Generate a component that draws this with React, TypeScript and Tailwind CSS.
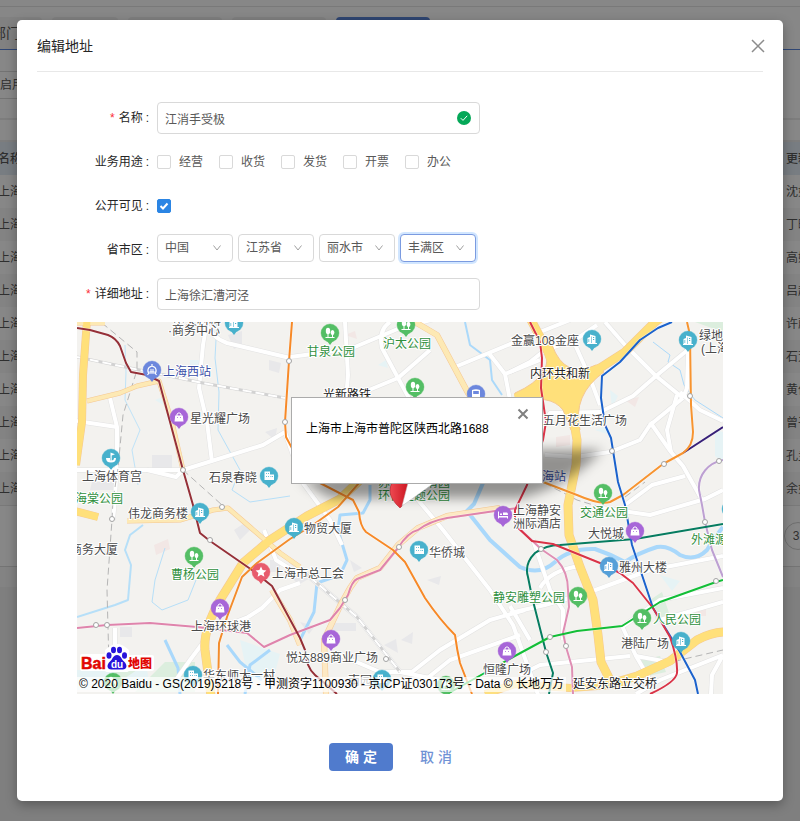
import { useState } from 'react';

const fontStack = "font-['Liberation_Sans','Noto_Sans_CJK_SC',sans-serif]";

const updaters = ['沈如', '丁晓', '高娟', '吕超', '许蔚', '石芳', '黄伟', '曾平', '孔圭', '余如'];

function BackgroundPage() {
  return (
    <div aria-hidden="true" className="absolute inset-0 overflow-hidden bg-[#f0f0f0] text-xs text-[#595959]">
      <div className="h-[567px] border-b border-[#dcdcdc] bg-white">
        <div className="h-[7px] border-b border-[#e4e4e4]" />
        <div className="flex h-[43px] items-stretch gap-[10px] border-b border-[#5b86dc] pt-[10px]">
          <div className="-ml-2 flex w-[50px] items-center rounded-t bg-[#f4f4f4] text-sm whitespace-nowrap">部门</div>
          <div className="w-[66px] rounded-t bg-[#f0f0f0]" />
          <div className="w-[94px] rounded-t bg-[#f0f0f0]" />
          <div className="w-[94px] rounded-t bg-[#f0f0f0]" />
          <div className="w-[94px] rounded-t bg-[#5a84d8]" />
        </div>
        <div className="h-[70px] border-b-2 border-[#ececec] pt-[21px]">
          <div className="-ml-3 flex h-7 w-20 items-center border-y border-[#d9d9d9]">已启用</div>
        </div>
        <div className="h-[22px] border-b-2 border-[#ececec]" />
        <div className="flex h-[33px] items-center justify-between bg-[#e3edf5] font-medium">
          <span className="-ml-0.5">名称</span>
          <span className="w-[14px] whitespace-nowrap">更新</span>
        </div>
        {updaters.map((name) => (
          <div key={name} className="flex h-[33px] items-center justify-between even:bg-white odd:bg-[#f8f8f8]">
            <span className="-ml-0.5">上海</span>
            <span className="w-[14px] whitespace-nowrap">{name}</span>
          </div>
        ))}
        <div className="flex justify-end border-t border-[#e4e4e4] pt-4">
          <span className="-mr-3 flex size-7 items-center justify-center rounded-full border border-[#d0d0d0] pr-1 text-xs">3</span>
        </div>
      </div>
      <div className="h-5 bg-[#f8f8f8]" />
      <div className="absolute inset-0 bg-black/47" />
    </div>
  );
}

type Road = { d: string; c: string; w: number };

const minor: string[] = [
  'M110 398 117 427 117 455 115 500 113 520',
  'M77 421 90 423 117 427',
  'M207 322 203 345 199 388 207 422 212 462',
  'M205 322Q212 338 227 343L290 358',
  'M77 470 147 470 183 470 263 445 285 432',
  'M147 470 176 477 183 470',
  'M285 432 290 447 303 483 330 520 342 545',
  'M290 357 350 349 400 328 450 315',
  'M345 322 348 375 346 400',
  'M390 322Q378 330 382 348L398 378 410 400',
  'M340 402 398 378 430 350',
  'M455 367 520 340 570 320',
  'M488 352 505 374 540 360M505 374 510 400',
  'M510 372 530 362 545 350 575 340 597 325',
  'M573 340 590 378 600 405',
  'M605 322 625 345 656 376 683 398',
  'M600 412 633 396 656 376 690 348',
  'M683 398 650 425 640 440 610 452 575 457 545 455',
  'M650 422 671 452 683 466 702 500',
  'M677 395 667 430 671 452',
  'M680 392 700 410 723 421',
  'M545 422 550 413 600 412',
  'M688 350 687 388 683 398',
  'M625 505 652 485 685 476',
  'M602 508 650 515 705 499 723 490',
  'M418 500 443 530 490 590 513 625 540 700',
  'M533 540 550 590 563 610 563 640',
  'M510 613 545 605 590 592 650 570 723 556',
  'M540 588Q550 570 580 566',
  'M622 627 660 600 723 588',
  'M622 626 636 656 650 680',
  'M636 656 668 662',
  'M660 620 723 602',
  'M510 606 530 640',
  'M520 675 540 665 590 660 630 656',
  'M290 560 325 590 357 617 400 672 440 680',
  'M340 655 380 672 412 672 440 650 490 620 525 610',
  'M425 680 450 660 520 635',
  'M300 583 280 590 262 608 248 617 225 626',
  'M264 530 276 560 300 575',
  'M115 628 115 652 100 660',
  'M205 640 190 660 176 680',
  'M636 694 660 680 723 655M711 694 712 675 723 655',
];

const rivers: Road[] = [
  { d: 'M125 345 126 372 125 400 140 430 132 450 138 485', c: '#bfe3f8', w: 1 },
  { d: 'M217 322 215 358 219 392 218 430 240 470 232 490 250 502 290 496', c: '#b6dff8', w: 1 },
  { d: 'M465 322 470 345 490 360 492 380 502 395', c: '#abd9fa', w: 2 },
  { d: 'M653 342 670 355 668 362 680 370 684 385 695 400 723 418', c: '#abd9fa', w: 1 },
  { d: 'M143 525 130 535 125 550 131 565 128 600 115 605 77 617', c: '#b6dff8', w: 2 },
  { d: 'M165 548 155 580 152 602 162 610 188 600 196 580', c: '#b6dff8', w: 1 },
  { d: 'M370 485 370 500 363 513 340 515 338 530 347 560 340 575 317 583 314 612 300 640', c: '#a9d8fb', w: 3 },
  { d: 'M483 483 474 504 467 511 490 540 520 567Q540 576 555 562T595 549Q610 554 625 562 638 553 657 547 668 545 680 555 695 562 707 550L713 540 723 527', c: '#a9d8fb', w: 4 },
  { d: 'M165 640 178 668 180 694M227 645 240 662 262 680M245 694 250 665 270 650', c: '#a9d8fb', w: 3 },
];

const yellow: Road[] = [
  { d: 'M77 323H105M87 401 120 393 137 386 159 381 172 422 183 470', c: '#fde9b4', w: 4 },
  { d: 'M127 521 180 520 213 510 228 508 250 527 280 553 300 567', c: '#fde9b4', w: 4 },
  { d: 'M272 590 290 620 300 645M326 694 324 640 340 606 350 588 357 578 380 568 398 545 418 528 447 516 500 508', c: '#fde9c4', w: 5 },
  { d: 'M415 322 437 335 468 393 500 440', c: '#fde9b4', w: 5 },
  { d: 'M485 694 515 684 570 688 625 684', c: '#fddf80', w: 7 },
  { d: 'M87 320 83 375 82 422 76 465', c: '#ffe07a', w: 7 },
  { d: 'M75 511 98 517', c: '#ffe07a', w: 7 },
  { d: 'M360 480 340 499 307 516 270 540 243 563 220 600Q203 630 205 650L211 696', c: '#ffe07a', w: 8 },
  { d: 'M531 320 548 352 562 390', c: '#ffe07a', w: 8 },
  { d: 'M515 398 550 390 572 380 600 368 625 352 655 322 665 315', c: '#ffe07a', w: 8 },
  { d: 'M563 385 572 410 577 440 576 465 568 505 569 535 580 567 593 600 598 635 601 662 612 684', c: '#ffe07a', w: 8 },
  { d: 'M610 684 637 676 670 661 697 640Q712 632 725 632', c: '#ffe07a', w: 8 },
];

const metro: Road[] = [
  { d: 'M77 628 107 625 150 623 197 627 247 633 264 647 290 635 330 620 340 608 348 595Q352 581 357 579L380 570 398 548Q408 532 418 530 430 521 447 518L495 511 518 508', c: '#df84ac', w: 2 },
  { d: 'M521 530 541 549 557 560Q568 572 568 590L569 607 563 633 566 647 572 667 573 694', c: '#df8fb4', w: 2 },
  { d: 'M723 460C708 463 698 475 699 490L702 505 705 522 712 550 723 577', c: '#bda0d2', w: 2 },
  { d: 'M77 328 90 330 108 335Q116 338 120 346L126 363 131 372 147 375 159 381 183 470 193 505 200 533 210 541 252 570 272 586 300 638 305 650Q306 667 315 675L337 694', c: '#953038', w: 2 },
  { d: 'M292 322 289 361 285 422 286 437 293 450 320 483 353 500 359 512Q360 526 366 532L393 550 405 562 425 598Q440 620 455 635 457 650 460 663L472 694', c: '#f78927', w: 2 },
  { d: 'M359 483 338 507 313 525 290 539 257 563 242 577 227 617 219 643 218 694', c: '#f38c2c', w: 2 },
  { d: 'M723 427 683 453', c: '#372078', w: 2 },
  { d: 'M687 322 690 335 691 405 693 432Q693 446 683 453L663 464 623 495 610 502Q600 505 577 495L543 482', c: '#f79430', w: 2 },
  { d: 'M723 524 635 539 560 545Q546 545 535 553 524 564 528 577L532 597 546 652 553 673 549 694', c: '#067c60', w: 2 },
  { d: 'M672 322 658 328 640 340 620 362 602 376 601 398 605 425 611 438 618 482 625 505 632 545 638 563 653 608 680 652 695 680 698 694', c: '#1b62cc', w: 2 },
  { d: 'M530 322 540 342 542 358 541 388 546 422 543 440 527 485 515 510 515 525 532 541 553 544 600 563 620 573 633 583 653 608 670 637Q678 660 677 673 676 682 650 694', c: '#d93347', w: 2 },
  { d: 'M723 580 716 582 660 602 622 626 577 631 550 637 513 657 490 670 447 694', c: '#13be37', w: 2 },
];

const stations: [number, number][] = [
  [289, 361], [285, 422], [183, 470], [112, 519], [222, 507], [210, 540], [96, 625], [107, 625],
  [399, 547], [345, 600], [386, 659], [690, 396], [612, 451], [664, 464], [719, 461], [541, 549],
  [550, 637], [546, 652], [566, 646], [705, 522], [716, 581],
];

type Kind = 'tree' | 'bldg' | 'block' | 'bag' | 'train' | 'bus' | 'bed' | 'star' | 'gym';
const pins: [number, number, string, Kind][] = [
  [234, 323, '#48b1cc', 'bldg'], [152, 370, '#6c87dd', 'train'], [179, 417, '#a766d8', 'bag'],
  [111, 458, '#48b1cc', 'gym'], [269, 476, '#48b1cc', 'block'], [330, 333, '#54be65', 'tree'],
  [406, 325, '#54be65', 'tree'], [415, 387, '#54be65', 'tree'], [476, 394, '#6c87dd', 'bus'],
  [592, 339, '#48b1cc', 'bldg'], [688, 340, '#48b1cc', 'bldg'], [603, 493, '#54be65', 'tree'],
  [200, 512, '#48b1cc', 'bldg'], [294, 527, '#48b1cc', 'bldg'], [194, 556, '#54be65', 'tree'],
  [261, 572, '#e85b6c', 'star'], [220, 608, '#a766d8', 'bag'], [331, 639, '#a766d8', 'bag'],
  [193, 675, '#48b1cc', 'block'], [113, 682, '#54be65', 'tree'], [419, 550, '#48b1cc', 'block'],
  [382, 679, '#48b1cc', 'block'], [446, 685, '#54be65', 'tree'], [503, 515, '#a766d8', 'bed'],
  [635, 531, '#a766d8', 'bag'], [609, 566, '#559fd8', 'bldg'], [578, 596, '#54be65', 'tree'],
  [642, 618, '#54be65', 'tree'], [681, 641, '#48b1cc', 'bldg'], [507, 651, '#a766d8', 'bag'],
  [731, 509, '#48b1cc', 'bldg'],
];

function Glyph({ kind }: { kind: Kind }) {
  switch (kind) {
    case 'tree':
      return (
        <g fill="#fff">
          <ellipse cx="-2" cy="-2" rx="2.200" ry="3.200" />
          <ellipse cx="2.500" cy="-.5" rx="1.900" ry="2.600" />
          <path d="M-2.500 0h1v4h-1zM2 1h1v3H2zM-4.500 4h9v1h-9z" />
        </g>
      );
    case 'bldg':
      return <path fillRule="evenodd" fill="#fff" d="M-4.500 4V-1L-2 -2V-4.500L3.500 -3V4H5V5H-5V4zM-1 -2.500V4H-.4V-2.500zM1 -2V-1H2.200V-2zM1 0V1H2.200V0zM-3.500 0V3H-2.800V0z" />;
    case 'block':
      return <path fillRule="evenodd" fill="#fff" d="M-4.500 4V-4.500H1V-1.500H5V4zM-3 -3V-2H-2.200V-3zM-1 -3V-2H-.2V-3zM-3 0V1H-2.200V0zM-1 0V1H-.2V0zM1.500 0V1H2.300V0zM3.200 0V1H4V0z" />;
    case 'bag':
      return (
        <g>
          <path fill="#fff" d="M-3.800 -1.500H3.800L4.500 4.500H-4.500z" />
          <path fill="none" stroke="#fff" d="M-2 -1V-3Q0 -5.500 2 -3V-1" />
          <circle cx="-1.500" cy=".5" r=".5" fill="#a766d8" />
          <circle cx="1.500" cy=".5" r=".5" fill="#a766d8" />
        </g>
      );
    case 'train':
      return (
        <g fill="none" stroke="#fff" strokeWidth="1.200">
          <path d="M-3.500 3Q-5 0 -3 -2.500L0 -4L3 -2.500Q5 0 3.500 3zM-2 0H2M-3 3L-4.500 5M3 3L4.500 5M0 -4V-6" />
          <path d="M-2.500 1.800H2.500" />
        </g>
      );
    case 'bus':
      return <path fillRule="evenodd" fill="#fff" d="M-4 -4Q0 -5.500 4 -4V3H3V5H1.500V3H-1.500V5H-3V3H-4zM-2.800 -3V0H2.800V-3z" />;
    case 'bed':
      return <path fill="#fff" d="M-5 -3.500H-4V1H5V3.500H4V2.500H-4V3.500H-5zM-3 -1.500H-1V0H-3zM0 -2.500H4Q5 -2.500 5 0H0z" />;
    case 'star':
      return <path fill="#fff" d="M0 -5.500 1.600 -2 5.400 -1.600 2.600 1 3.400 4.700 0 2.800 -3.400 4.700 -2.600 1 -5.400 -1.600 -1.600 -2z" />;
    case 'gym':
      return (
        <g>
          <path fill="none" stroke="#fff" strokeWidth="2" d="M-4 0Q-4 3.500 0 3.500T4 0" />
          <path fill="#fff" d="M-.5 -5.500L4 -3.700 .7 -2.500V3H-.5zM-3 0H-1V3H-3z" />
        </g>
      );
  }
}

const GREY = '#4a4a4a';
const GREEN = '#2f8f3d';
const BLUE = '#3b50a8';
const labels: [number, number, string, string][] = [
  [173, 325, '中关村科', GREY], [168, 335, '·商务中心', GREY], [163, 376, '上海西站', BLUE],
  [190, 423, '星光耀广场', GREY], [82, 481, '上海体育宫', GREY], [75, 503, '海棠公园', GREEN],
  [209, 482, '石泉春晓', GREY], [307, 356, '甘泉公园', GREEN], [383, 348, '沪太公园', GREEN],
  [323, 399, '光新路铁', '#222'], [511, 345, '金赢108金座', GREY], [530, 378, '内环共和新', '#222'],
  [699, 340, '绿地中心', GREY], [701, 353, '(上海)', GREY], [543, 425, '五月花生活广场', GREY],
  [530, 481, '上海站', BLUE], [128, 518, '伟龙商务楼', GREY], [70, 554, '商务大厦', GREY],
  [171, 579, '曹杨公园', GREEN], [272, 578, '上海市总工会', GREY], [304, 533, '物贸大厦', GREY],
  [429, 557, '华侨城', GREY], [513, 515, '上海静安', GREY], [513, 528, '洲际酒店', GREY],
  [580, 517, '交通公园', GREEN], [588, 538, '大悦城', GREY], [691, 544, '外滩源', GREEN],
  [619, 572, '雅州大楼', GREY], [493, 602, '静安雕塑公园', GREEN], [653, 624, '人民公园', GREEN],
  [621, 648, '港陆广场', GREY], [191, 631, '上海环球港', GREY], [286, 662, '悦达889商业广场', GREY],
  [483, 674, '恒隆广场', GREY], [203, 680, '华东师大一村', GREY], [348, 685, '南园', GREY],
  [573, 688, '延安东路立交桥', '#222'], [378, 487, '苏州河梦清园', GREEN], [378, 500, '环保主题公园', GREEN],
];

function CityMap() {
  return (
    <svg className="block h-[372px] w-full" viewBox="77 322 646 372" preserveAspectRatio="xMidYMid slice" role="img" aria-label="地图">
      <defs>
        <filter id="blur" x="-20%" y="-50%" width="140%" height="200%"><feGaussianBlur stdDeviation="6" /></filter>
        <linearGradient id="pinRed" x1="0" x2="1">
          <stop offset="0" stopColor="#ee4a52" />
          <stop offset="1" stopColor="#c8101c" />
        </linearGradient>
      </defs>
      <rect x="77" y="322" width="646" height="372" fill="#f3f2ef" />
      <g fill="#e8e8ea">
        <path d="M152 455h20v14h-20zM228 335l14-4v14l-8 4zM269 360l12 3-2 10-10-3zM265 432l12-4-2 12zM234 530l12-8 6 6-12 12zM290 575l14-8 8 10-14 8zM427 580l14-4-2 9zM300 622l15 4-6 8zM330 623h26v8h-26zM384 645l12-6 2 14zM401 640l12-8-1 12zM350 560l12 8-8 4zM120 627h12v10h-12zM92 482h22v8H90zM270 560h10v12h-10z" />
        <path fill="#f2e7e5" d="M154 545l14-6 2 10-14 6zM345 335l10-4 2 8zM556 437l14-2v10l-14 2zM625 400l14-3-4 10zM690 610l16-4v10h-14z" />
        <path fill="#e6f3f5" d="M190 360h10v12h-10zM155 400l10-4v10zM378 365l8-5 2 8zM610 390l8 6-6 12zM595 430l12-4v8zM240 640l40 14-8 30-24-6zM77 670h70l4 20H77zM715 430l8 2v30l-8-6zM660 575l20 6-8 10z" />
        <path fill="#dceede" d="M695 322h28v10zM650 600l12-8 8 24-14 4zM640 660l20-4 6 16-18 4zM165 662h30v30h-60zM112 670l40-10-30 20z" />
      </g>
      <g fill="none" strokeLinecap="butt" strokeLinejoin="round">
        {rivers.map((r) => <path key={r.d} d={r.d} stroke={r.c} strokeWidth={r.w} />)}
        {minor.map((d) => <path key={d} d={d} stroke="#e2e2e2" strokeWidth="5" />)}
        {minor.map((d) => <path key={d} d={d} stroke="#fff" strokeWidth="4" />)}
        <path d="M77 357 130 368 203 383 285 398M290 560 325 590 357 617 400 672" stroke="#d2d2d2" strokeWidth="3" />
        <path d="M77 357 130 368 203 383 285 398M290 560 325 590 357 617 400 672" stroke="#fff" strokeWidth="2" strokeDasharray="9 4" />
        <path d="M102 323 137 352 137 370 123 415 118 468 113 500 112 520 107 590 109 665M183 470 222 505 270 545 290 560M535 478 577 500 600 507M625 497 645 482M612 684 680 660 723 650" stroke="#b5b5b5" strokeDasharray="7 4" />
        {yellow.map((r) => <path key={r.d} d={r.d} stroke="#f5c893" strokeWidth={r.w + 1} />)}
        <path d="M545 345Q556 375 515 393L517 403Q550 393 563 410L571 430H580Q572 395 604 372L596 365Q565 380 552 345z" fill="#ffe07a" stroke="#f5c893" strokeWidth="1" />
        {yellow.map((r) => <path key={r.d} d={r.d} stroke={r.c} strokeWidth={r.w} />)}
        {metro.map((r) => <path key={r.d} d={r.d} stroke="#fff" strokeOpacity=".5" strokeWidth={r.w + 1} />)}
        {metro.map((r) => <path key={r.d} d={r.d} stroke={r.c} strokeWidth={r.w} />)}
      </g>
      {stations.map(([x, y]) => <circle key={`${x}-${y}`} cx={x} cy={y} r="2.500" fill="#fff" stroke="#a3a3a3" />)}
      {pins.map(([x, y, c, kind]) => (
        <g key={`${x}-${y}`} transform={`translate(${x} ${y})`}>
          <path d="M-3 8H3L0 12z" fill={c} />
          <circle r="9" fill={c} stroke={c} strokeOpacity=".4" />
          <Glyph kind={kind} />
        </g>
      ))}
      <g fontSize="12" stroke="#fff" strokeWidth="2" strokeLinejoin="round" paintOrder="stroke">
        {labels.map(([x, y, text, c]) => <text key={text} x={x} y={y} fill={c}>{text}</text>)}
      </g>
      <path d="M300 480 330 498H520Q570 486 602 450H530z" fill="#000" fillOpacity=".4" filter="url(#blur)" />
      <path d="M400 508Q390 499 390 491 390 480 400 480T410 491Q409 500 400 508z" fill="url(#pinRed)" stroke="#a91520" strokeWidth=".5" />
      <path d="M408 483 402 506 434 483z" fill="#fff" />
      <path d="M408 483 402 506 434 483" fill="none" stroke="#bbb" strokeWidth=".5" />
    </svg>
  );
}

function BaiduLogo() {
  return (
    <svg className="block h-[33px] w-[76px]" viewBox="79 644 76 33" role="img" aria-label="百度地图">
      <g stroke="#fff" strokeWidth="4" strokeLinejoin="round" fill="#fff">
        <path d="M82 656H105V669H82zM128 657H152V669H128zM107 651Q117 641 127 651V670H107z" />
      </g>
      <text x="81" y="669" fill="#e10602" stroke="#e10602" strokeWidth=".5" fontSize="16" fontWeight="700">Bai</text>
      <g fill="#2713db">
        <ellipse cx="109" cy="655.500" rx="2.500" ry="3.200" />
        <ellipse cx="113.500" cy="650" rx="2.500" ry="3.200" />
        <ellipse cx="119.500" cy="650" rx="2.500" ry="3.200" />
        <ellipse cx="124.500" cy="655.500" rx="2.500" ry="3.200" />
        <path d="M117 655C113 655 113 659 110 661.500 106 665 107 670 112 669.500H122C127 670 128 665 124 661.500 121 659 121 655 117 655z" />
      </g>
      <text x="111" y="668" fill="#fff" fontSize="10" fontWeight="700">du</text>
      <text x="128" y="668" fill="#e10602" fontSize="12" fontWeight="900">地图</text>
    </svg>
  );
}

function Label({ text, required, htmlFor }: { text: string; required?: boolean; htmlFor?: string }) {
  return (
    <label htmlFor={htmlFor} className="flex w-[120px] shrink-0 justify-end pr-2 text-[#262626]">
      {required && <span className="mr-1 text-red-500">*</span>}
      {text}
      <span className="ml-[3px]">:</span>
    </label>
  );
}

function Tick({ label, checked, onChange, name }: { label?: string; name: string; checked: boolean; onChange: () => void }) {
  return (
    <label className="flex items-center gap-2">
      <span className="relative block size-[14px]">
        <input
          type="checkbox"
          aria-label={name}
          checked={checked}
          onChange={onChange}
          className="block size-[14px] appearance-none rounded-[2px] border border-[#d9d9d9] bg-white checked:border-[#2b85e4] checked:bg-[#2b85e4]"
        />
        {checked && (
          <svg className="pointer-events-none absolute inset-0" viewBox="0 0 14 14" fill="none" stroke="#fff" strokeWidth="2">
            <path d="M3.500 7 6 9.500 10.500 4.500" />
          </svg>
        )}
      </span>
      {label}
    </label>
  );
}

const regions = ['中国', '江苏省', '丽水市', '丰满区'];
const uses = ['经营', '收货', '发货', '开票', '办公'];

export default function App() {
  const [picked, setPicked] = useState<string[]>([]);
  const [visible, setVisible] = useState(true);
  const toggle = (u: string) => setPicked(picked.includes(u) ? picked.filter((p) => p !== u) : [...picked, u]);

  return (
    <div className={`relative min-h-screen px-[17px] py-5 text-xs text-[#595959] ${fontStack}`}>
      <BackgroundPage />
      <div role="dialog" aria-labelledby="title" className="relative rounded-[5px] bg-white px-5 pb-[30px] shadow-[0_4px_12px_rgba(0,0,0,0.3)]">
        <header className="flex h-[52px] items-center justify-between border-b border-[#e8e8e8]">
          <h1 id="title" className="text-sm text-[#262626]">编辑地址</h1>
          <button type="button" aria-label="关闭" className="-mr-0.5">
            <svg className="block size-[14px]" viewBox="0 0 14 14" stroke="#8c8c8c" strokeWidth="1.500">
              <path d="M1 1 13 13M13 1 1 13" />
            </svg>
          </button>
        </header>

        <form className="pt-[30px]" onSubmit={(e) => e.preventDefault()}>
          <div className="flex flex-col gap-3">
            <div className="flex h-8 items-center">
              <Label text="名称" required htmlFor="name" />
              <div className="relative">
                <input id="name" defaultValue="江消手受极" className="block h-8 w-[323px] rounded border border-[#d9d9d9] px-[7px] outline-none" />
                <svg className="absolute top-[9px] right-[9px] size-[14px]" viewBox="0 0 14 14">
                  <circle cx="7" cy="7" r="7" fill="#05a858" />
                  <path d="M3.800 7.200 6 9.400 10.200 4.800" fill="none" stroke="#fff" />
                </svg>
              </div>
            </div>
            <div className="flex h-8 items-center">
              <Label text="业务用途" />
              <div className="flex gap-4">
                {uses.map((u) => <Tick key={u} name={u} label={u} checked={picked.includes(u)} onChange={() => toggle(u)} />)}
              </div>
            </div>
            <div className="flex h-8 items-center">
              <Label text="公开可见" />
              <Tick name="公开可见" checked={visible} onChange={() => setVisible(!visible)} />
            </div>
            <div className="flex h-8 items-center">
              <Label text="省市区" htmlFor="region-0" />
              <div className="flex gap-[5px] self-start">
                {regions.map((r, i) => (
                  <div key={r} className="relative">
                    <select
                      id={`region-${i}`}
                      aria-label={r}
                      className={`block h-7 w-[76px] appearance-none rounded border bg-white pl-[7px] outline-none ${i === 3 ? 'border-[#7b9be0] shadow-[0_0_0_2px_rgba(24,130,255,0.2)]' : 'border-[#d9d9d9]'}`}
                    >
                      <option>{r}</option>
                    </select>
                    <svg className="pointer-events-none absolute top-[10px] right-3 size-2" viewBox="0 0 8 8" fill="none" stroke="#a0a0a0">
                      <path d="M.5 1.500 4 6 7.500 1.500" />
                    </svg>
                  </div>
                ))}
              </div>
            </div>
            <div className="flex h-8 items-center">
              <Label text="详细地址" required htmlFor="address" />
              <input id="address" defaultValue="上海徐汇漕河泾" className="block h-8 w-[323px] rounded border border-[#d9d9d9] px-[7px] outline-none" />
            </div>
          </div>

          <div className="relative mx-10 mt-3 overflow-hidden">
            <CityMap />
            <div className="absolute top-[75px] left-1/2 -ml-[109px] h-[87px] w-[252px] border border-[#ababab] bg-white px-[14px] pt-[23px] text-black">
              上海市上海市普陀区陕西北路1688
              <button type="button" aria-label="关闭信息窗" className="absolute top-[10px] right-[13px]">
                <svg className="block size-3" viewBox="0 0 12 12" stroke="#808080" strokeWidth="2">
                  <path d="M1.500 1.500 10.500 10.500M10.500 1.500 1.500 10.500" />
                </svg>
              </button>
            </div>
            <div className="absolute bottom-0 left-0">
              <div className="ml-0.5"><BaiduLogo /></div>
              <div className="mb-0.5 bg-white/70 px-0.5 leading-[15px] text-black">
                © 2020 Baidu - GS(2019)5218号 - 甲测资字1100930 - 京ICP证030173号 - Data © 长地万方
              </div>
            </div>
          </div>

          <footer className="mt-[49px] flex justify-center gap-2">
            <button type="submit" className="h-7 w-16 rounded bg-[#507bcd] text-sm font-bold text-white">确 定</button>
            <button type="button" className="h-7 w-[70px] rounded text-sm font-medium text-[#6f92d5]">取 消</button>
          </footer>
        </form>
      </div>
    </div>
  );
}
